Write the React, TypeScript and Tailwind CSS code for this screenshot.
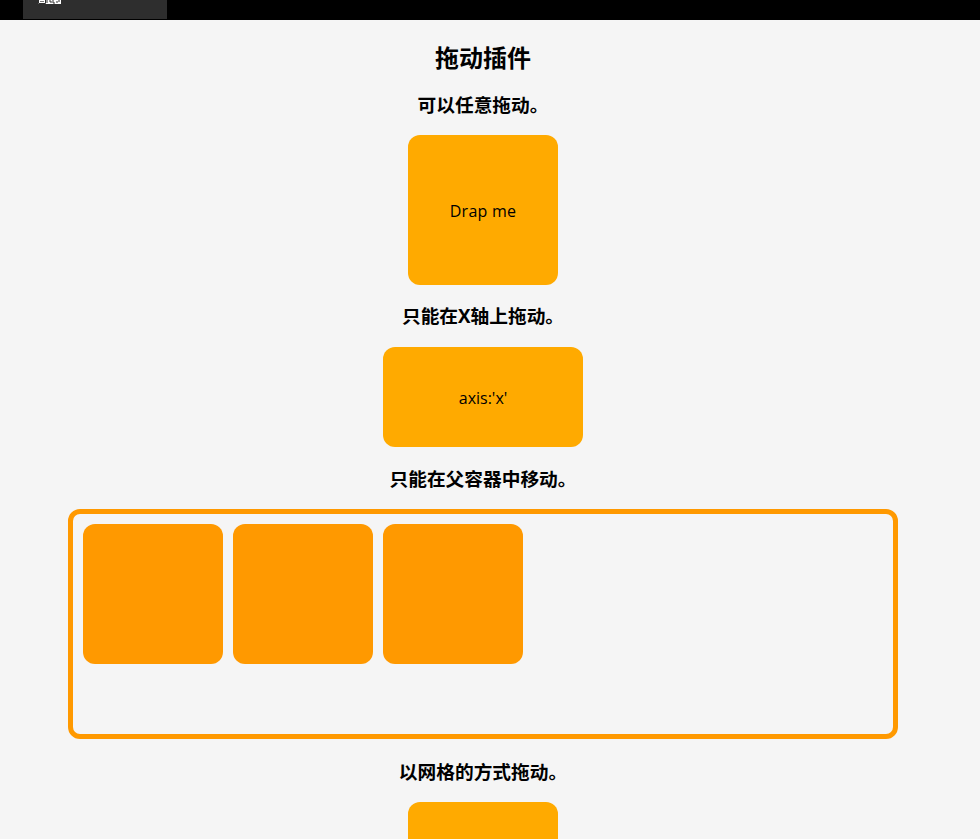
import React from 'react';

const fontStack = "font-['Open_Sans','Noto_Sans_CJK_SC',sans-serif]";

const Heading: React.FC<{ children: React.ReactNode }> = ({ children }) => (
  <h3 className="text-[18.72px] leading-[30px] font-bold text-black text-center">{children}</h3>
);

export default function App() {
  return (
    <div className={`${fontStack} h-[839px] overflow-hidden bg-[#f5f5f5] text-black`}>
      {/* top bar */}
      <div className="h-5 bg-black pl-[23px]">
        <div className="h-[19px] w-[144px] bg-[#2e2e2e] pl-[15px]">
          <svg width="23" height="4" viewBox="0 0 23 4" className="block">
            <rect width="23" height="4" fill="#fff" />
            <path d="M0.5 0V3.5H7.5V0" fill="none" stroke="#2e2e2e" />
            <path d="M2 1.5H6" stroke="#777" />
            <path d="M9 0V3M11 1H13V3M15 0V3H17M19 1V3M21 0V2" stroke="#2e2e2e" fill="none" />
          </svg>
        </div>
      </div>

      <div className="flex w-[966px] flex-col items-center">
        <h2 className="mt-[21px] text-[24px] leading-[34px] font-bold text-center">拖动插件</h2>
        <div className="mt-[15px]">
          <Heading>可以任意拖动。</Heading>
        </div>
        <div className="mt-[15px] flex h-[150px] w-[150px] items-center justify-center rounded-xl bg-[#ffaa00] pt-0.5 text-base tracking-[0.25px]">
          Drap me
        </div>
        <div className="mt-4">
          <Heading>只能在X轴上拖动。</Heading>
        </div>
        <div className="mt-4 flex h-[100px] w-[200px] items-center justify-center rounded-xl bg-[#ffaa00] pt-0.5 text-base">
          axis:'x'
        </div>
        <div className="mt-[17px]">
          <Heading>只能在父容器中移动。</Heading>
        </div>
        <div className="mt-[15px] ml-[68px] flex h-[230px] w-[830px] items-start gap-2.5 self-start rounded-xl border-[5px] border-[#ff9900] p-[10px]">
          <div className="h-[140px] w-[140px] rounded-xl bg-[#ff9900]" />
          <div className="h-[140px] w-[140px] rounded-xl bg-[#ff9900]" />
          <div className="h-[140px] w-[140px] rounded-xl bg-[#ff9900]" />
        </div>
        <div className="mt-[18px]">
          <Heading>以网格的方式拖动。</Heading>
        </div>
        <div className="mt-[15px] h-[150px] w-[150px] shrink-0 rounded-xl bg-[#ffaa00]" />
      </div>
    </div>
  );
}
